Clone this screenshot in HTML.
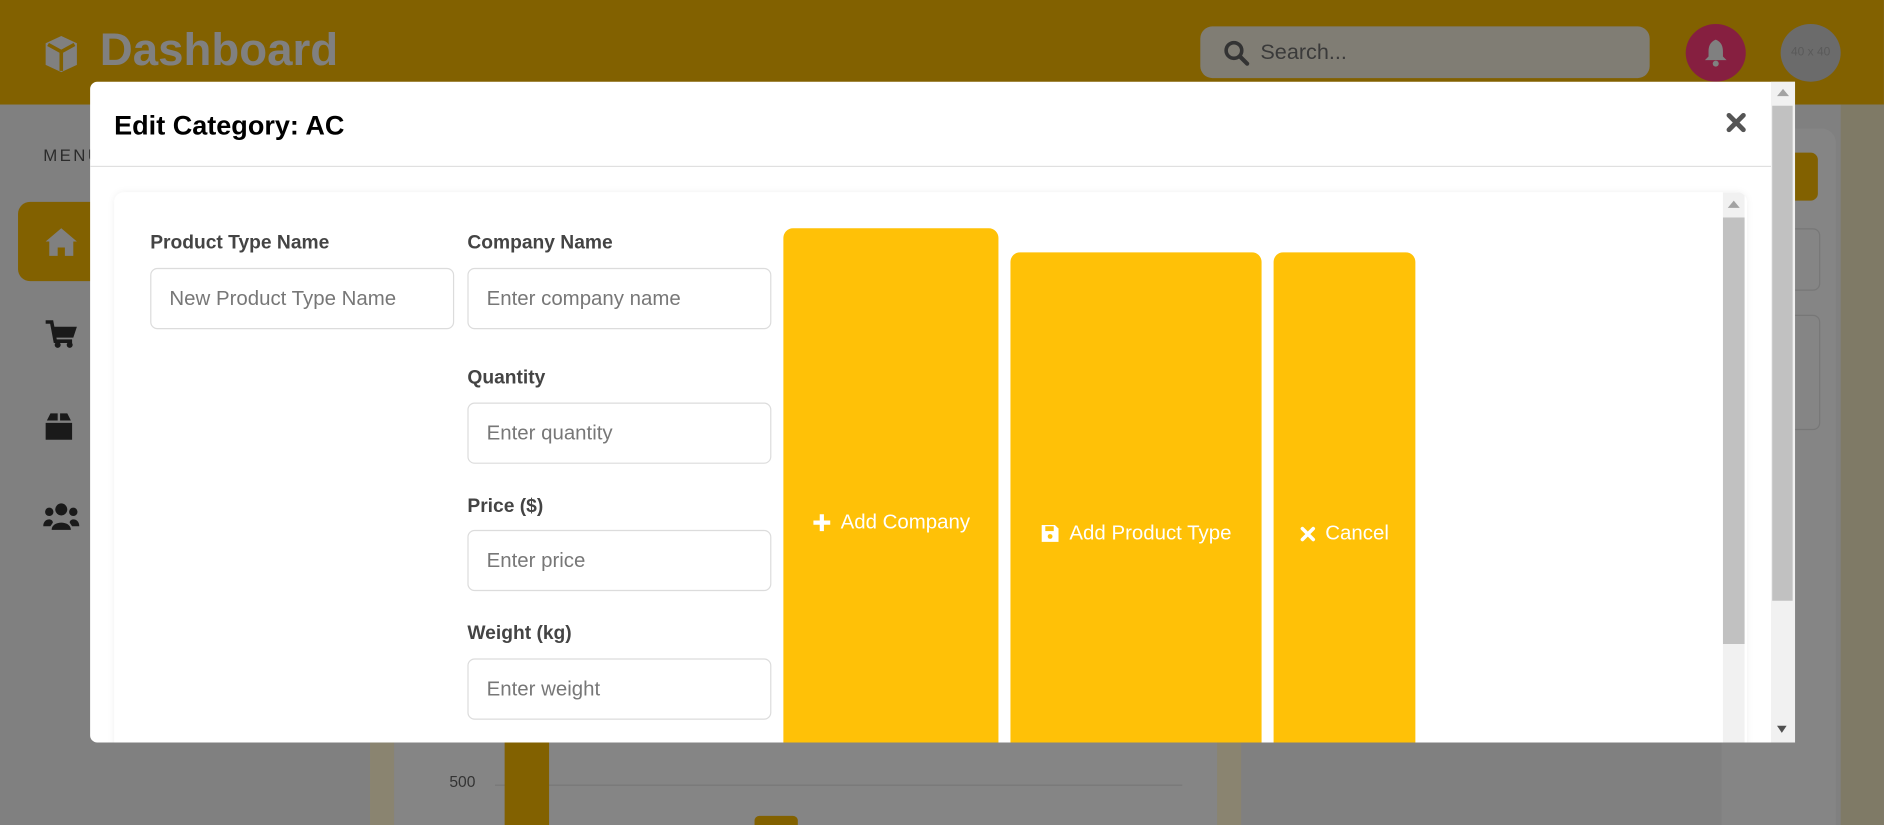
<!DOCTYPE html>
<html><head><meta charset="utf-8"><style>
html,body{margin:0;padding:0;width:1884px;height:825px;overflow:hidden;background:#808080;font-family:"Liberation Sans",Arial,sans-serif}
#w{position:absolute;left:0;top:0;width:1568px;height:687px;transform:scale(1.2015);transform-origin:0 0;background:#808080;overflow:hidden}
.a{position:absolute}
.lbl{position:absolute;font-size:16px;font-weight:bold;color:#444;}
.inp{position:absolute;height:51px;border:1px solid #dcdcdc;border-radius:6px;box-sizing:border-box;font-size:17px;color:#777;line-height:49px;padding-left:15px;background:#fff}
.btn{position:absolute;background:#FFC107;border-radius:8px;color:#fff;font-size:17px;display:flex;align-items:center;justify-content:center;gap:8px}
</style></head><body><div id="w">
<div class="a" style="left:0;top:0;width:1568px;height:87px;background:#826100"></div>
<svg class="a" style="left:35px;top:28px" width="32" height="34" viewBox="0 0 32 34"><path d="M16 2 L29 8 L29 26 L16 32 L3 26 L3 8Z" fill="#808080"/><path d="M5 9 L16 15 L27 9 M16 15 L16 31" stroke="#826100" stroke-width="3" fill="none"/></svg>
<div class="a" style="left:83px;top:21px;font-size:38px;font-weight:bold;color:#808080">Dashboard</div>
<div class="a" style="left:999px;top:22px;width:374px;height:43px;background:#807d74;border-radius:10px"></div>
<svg class="a" style="left:1018px;top:33px" width="22" height="22" viewBox="0 0 22 22"><circle cx="9" cy="9" r="6.5" stroke="#333" stroke-width="3" fill="none"/><path d="M14 14 L20 20" stroke="#333" stroke-width="3.5" stroke-linecap="round"/></svg>
<div class="a" style="left:1049px;top:33px;font-size:18px;color:#3a3a3a">Search...</div>
<div class="a" style="left:1403px;top:20px;width:50px;height:48px;border-radius:50%;background:#861f40"></div>
<svg class="a" style="left:1417px;top:32px" width="22" height="24" viewBox="0 0 22 24"><path d="M11 1 C6 3 5 7 5 11 L5 15 L2 18 L20 18 L17 15 L17 11 C17 7 16 3 11 1Z" fill="#808080"/><circle cx="11" cy="21" r="2.5" fill="#808080"/></svg>
<div class="a" style="left:1482px;top:20px;width:50px;height:48px;border-radius:50%;background:#6b6b6b;color:#5a5a5a;font-size:10px;line-height:48px;text-align:center">40 x 40</div>
<div class="a" style="left:36px;top:121px;font-size:14px;letter-spacing:2px;color:#2b2b2b">MENU</div>
<div class="a" style="left:15px;top:168px;width:80px;height:66px;border-radius:10px;background:#826100"></div>
<svg class="a" style="left:36px;top:188px" width="30" height="26" viewBox="0 0 30 26"><path d="M15 2 L2 13 L5 13 L5 25 L12 25 L12 18 L18 18 L18 25 L25 25 L25 13 L28 13 Z" fill="#808080"/></svg>
<svg class="a" style="left:36px;top:265px" width="30" height="26" viewBox="0 0 30 26"><path d="M2 3 L7 3 L10 19 L24 19" stroke="#1a1a1a" stroke-width="3" fill="none"/><path d="M8 7 L28 7 L25 16 L10 16Z" fill="#1a1a1a"/><circle cx="12" cy="22" r="2.5" fill="#1a1a1a"/><circle cx="22" cy="22" r="2.5" fill="#1a1a1a"/></svg>
<svg class="a" style="left:36px;top:342px" width="26" height="26" viewBox="0 0 26 26"><path d="M3 8 L6 2 L12 2 L12 8Z M14 2 L20 2 L23 8 L14 8Z M2 10 L24 10 L24 24 L2 24Z" fill="#1a1a1a"/></svg>
<svg class="a" style="left:35px;top:418px" width="32" height="24" viewBox="0 0 32 24"><circle cx="16" cy="6" r="5" fill="#1a1a1a"/><circle cx="6" cy="8" r="3.5" fill="#1a1a1a"/><circle cx="26" cy="8" r="3.5" fill="#1a1a1a"/><path d="M8 23 C8 15 24 15 24 23Z M1 20 C1 13 9 13 9 17 L7 20Z M31 20 C31 13 23 13 23 17 L25 20Z" fill="#1a1a1a"/></svg>
<div class="a" style="left:1433px;top:107px;width:95px;height:600px;background:#858585;border-radius:12px"></div>
<div class="a" style="left:1473px;top:127px;width:40px;height:40px;background:#826100;border-radius:6px"></div>
<div class="a" style="left:1473px;top:190px;width:40px;height:50px;border:1px solid #777;border-radius:6px"></div>
<div class="a" style="left:1473px;top:262px;width:40px;height:94px;border:1px solid #777;border-radius:6px"></div>
<div class="a" style="left:1532px;top:87px;width:36px;height:600px;background:#7f7a66"></div>
<div class="a" style="left:308px;top:600px;width:722px;height:87px;background:#858585"></div>
<div class="a" style="left:308px;top:600px;width:20px;height:87px;background:#8a8470"></div>
<div class="a" style="left:1013px;top:600px;width:20px;height:87px;background:#8a8470"></div>
<div class="a" style="left:374px;top:643px;font-size:13px;color:#333">500</div>
<div class="a" style="left:412px;top:653px;width:572px;height:1px;background:#777"></div>
<div class="a" style="left:420px;top:610px;width:37px;height:80px;background:#826100"></div>
<div class="a" style="left:628px;top:679px;width:36px;height:20px;background:#826100;border-radius:4px"></div>
<div class="a" style="left:75px;top:68px;width:1419px;height:550px;background:#fff;border-radius:6px 0 0 6px;overflow:hidden">
 <div class="a" style="left:20px;top:24px;font-size:22.5px;font-weight:bold;color:#000">Edit Category: AC</div>
 <svg class="a" style="left:1361px;top:25px" width="18" height="18" viewBox="0 0 18 18"><path d="M3 3 L15 15 M15 3 L3 15" stroke="#555" stroke-width="4" stroke-linecap="round"/></svg>
 <div class="a" style="left:0;top:70px;width:1399px;height:1px;background:#e0e0e0"></div>
 <div class="a" style="left:1399px;top:0;width:20px;height:550px;background:#f1f1f1"></div>
 <div class="a" style="left:1400px;top:20px;width:17px;height:412px;background:#c1c1c1"></div>
 <div class="a" style="left:1404px;top:6px;width:0;height:0;border-left:5px solid transparent;border-right:5px solid transparent;border-bottom:6px solid #a3a3a3"></div>
 <div class="a" style="left:1404px;top:536px;width:0;height:0;border-left:4px solid transparent;border-right:4px solid transparent;border-top:6px solid #505050"></div>
 <div class="a" style="left:20px;top:92px;width:1359px;height:480px;background:#fff;border-radius:8px;box-shadow:0 0 6px rgba(0,0,0,0.06);overflow:hidden">
  <div class="a" style="left:1339px;top:0;width:18px;height:480px;background:#f1f1f1"></div>
  <div class="a" style="left:1339px;top:21px;width:18px;height:355px;background:#c1c1c1"></div>
  <div class="a" style="left:1343px;top:7px;width:0;height:0;border-left:5px solid transparent;border-right:5px solid transparent;border-bottom:6px solid #a3a3a3"></div>
 </div>
</div>
<div class="lbl" style="left:125px;top:194px">Product Type Name</div>
<div class="inp" style="left:125px;top:223px;width:253px">New Product Type Name</div>
<div class="lbl" style="left:389px;top:194px">Company Name</div>
<div class="inp" style="left:389px;top:223px;width:253px">Enter company name</div>
<div class="lbl" style="left:389px;top:306px">Quantity</div>
<div class="inp" style="left:389px;top:335px;width:253px">Enter quantity</div>
<div class="lbl" style="left:389px;top:413px">Price ($)</div>
<div class="inp" style="left:389px;top:441px;width:253px">Enter price</div>
<div class="lbl" style="left:389px;top:519px">Weight (kg)</div>
<div class="inp" style="left:389px;top:548px;width:253px">Enter weight</div>
<div style="position:absolute;left:0;top:0;width:1474px;height:618px;overflow:hidden">
<div class="btn" style="left:652px;top:190px;width:179px;height:490px"><svg width="16" height="16" viewBox="0 0 16 16"><path d="M8 1 V15 M1 8 H15" stroke="#fff" stroke-width="3.5"/></svg>Add Company</div>
<div class="btn" style="left:841px;top:210px;width:209px;height:468px"><svg width="16" height="16" viewBox="0 0 16 16"><path d="M1 1 H12 L15 4 V15 H1Z" fill="#fff"/><rect x="4" y="2" width="7" height="4" fill="#FFC107"/><circle cx="8" cy="10.5" r="2" fill="#FFC107"/></svg>Add Product Type</div>
<div class="btn" style="left:1060px;top:210px;width:118px;height:468px"><svg width="13" height="13" viewBox="0 0 13 13"><path d="M2 2 L11 11 M11 2 L2 11" stroke="#fff" stroke-width="3" stroke-linecap="round"/></svg>Cancel</div>
</div>
</div></body></html>
